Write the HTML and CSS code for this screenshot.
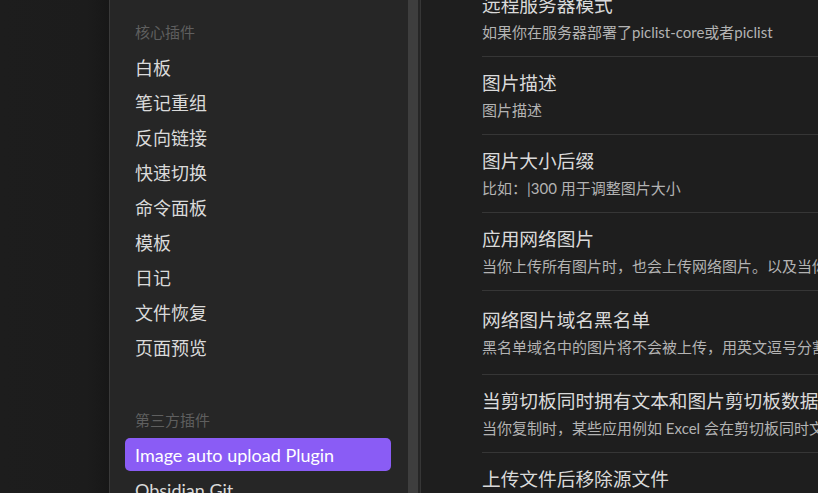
FILE: index.html
```html
<!DOCTYPE html>
<html lang="zh-CN">
<head>
<meta charset="utf-8">
<title>设置</title>
<link rel="stylesheet" href="styles.css">
</head>
<body>
<div class="backdrop"></div>
<div class="modal">
  <nav class="sidebar">
    <div class="sidebar-scroll">
      <div class="group">
        <div class="group-title">核心插件</div>
        <div class="nav-item">白板</div>
        <div class="nav-item">笔记重组</div>
        <div class="nav-item">反向链接</div>
        <div class="nav-item">快速切换</div>
        <div class="nav-item">命令面板</div>
        <div class="nav-item">模板</div>
        <div class="nav-item">日记</div>
        <div class="nav-item">文件恢复</div>
        <div class="nav-item">页面预览</div>
      </div>
      <div class="group">
        <div class="group-title">第三方插件</div>
        <div class="nav-item is-active">Image auto upload Plugin</div>
        <div class="nav-item">Obsidian Git</div>
      </div>
    </div>
    <div class="scrollbar"><div class="thumb"></div></div>
  </nav>
  <main class="content">
    <div class="settings">
      <div class="setting-item">
        <div class="setting-name">远程服务器模式</div>
        <div class="setting-desc">如果你在服务器部署了piclist-core或者piclist</div>
      </div>
      <div class="setting-item">
        <div class="setting-name">图片描述</div>
        <div class="setting-desc">图片描述</div>
      </div>
      <div class="setting-item">
        <div class="setting-name">图片大小后缀</div>
        <div class="setting-desc">比如：|300 用于调整图片大小</div>
      </div>
      <div class="setting-item">
        <div class="setting-name">应用网络图片</div>
        <div class="setting-desc">当你上传所有图片时，也会上传网络图片。以及当你进行黏贴时，剪切板中的标准 md 图片会被上传</div>
      </div>
      <div class="setting-item setting-item--tall">
        <div class="setting-name">网络图片域名黑名单</div>
        <div class="setting-desc">黑名单域名中的图片将不会被上传，用英文逗号分割</div>
      </div>
      <div class="setting-item">
        <div class="setting-name">当剪切板同时拥有文本和图片剪切板数据时是否上传图片</div>
        <div class="setting-desc">当你复制时，某些应用例如 Excel 会在剪切板同时文本和图像数据，确认是否上传。</div>
      </div>
      <div class="setting-item">
        <div class="setting-name">上传文件后移除源文件</div>
        <div class="setting-desc">上传文件后移除在附件文件夹中的文件</div>
      </div>
    </div>
  </main>
</div>
</body>
</html>
```
FILE: styles.css
```css
* { box-sizing: border-box; }

html, body {
  margin: 0;
  padding: 0;
  height: 493px;
  overflow: hidden;
  background: #1c1c1c;
}

body {
  display: flex;
  font-family: "Segoe UI", "Lato", "Noto Sans CJK SC", sans-serif;
  color: #dadada;
}

.backdrop {
  width: 109px;
  flex: none;
  background: linear-gradient(to right, #1d1d1d 0%, #1c1c1c 80%, #171717 100%);
}

.modal {
  flex: none;
  display: flex;
  width: 1200px;
  height: 493px;
  border-left: 1px solid #3a3a3a;
}

.sidebar {
  flex: none;
  width: 311px;
  display: flex;
  background: #262626;
  border-right: 1px solid #363636;
}

.sidebar-scroll {
  flex: 1;
  padding: 15px 17px 0 15px;
  overflow: hidden;
}

.group {
  display: flex;
  flex-direction: column;
  gap: 2px;
  margin-bottom: 40px;
}

.group-title {
  height: 33px;
  display: flex;
  align-items: center;
  padding-left: 10px;
  font-size: 15px;
  color: #5f5f5f;
}

.nav-item {
  height: 33px;
  display: flex;
  align-items: center;
  padding-left: 10px;
  font-size: 18px;
  color: #dadada;
  border-radius: 5px;
  white-space: nowrap;
}

.nav-item.is-active {
  background: #8a5cf5;
  color: #ffffff;
}

.scrollbar {
  flex: none;
  width: 12px;
  padding-right: 2px;
}

.thumb {
  height: 100%;
  background: #3e3e3e;
}

.content {
  flex: 1;
  background: #1e1e1e;
  padding-left: 61px;
  overflow: hidden;
}

.settings {
  margin-top: -22px;
  width: 760px;
}

.setting-item {
  display: flex;
  flex-direction: column;
  gap: 4px;
  padding: 14px 0 13px;
  border-top: 1px solid #363636;
}

.setting-item--tall {
  padding: 17px 0 16px;
}

.setting-name {
  font-size: 18.7px;
  line-height: 24px;
  color: #dadada;
  white-space: nowrap;
}

.setting-desc {
  font-size: 15px;
  line-height: 22px;
  color: #b3b3b3;
  white-space: nowrap;
}
```
